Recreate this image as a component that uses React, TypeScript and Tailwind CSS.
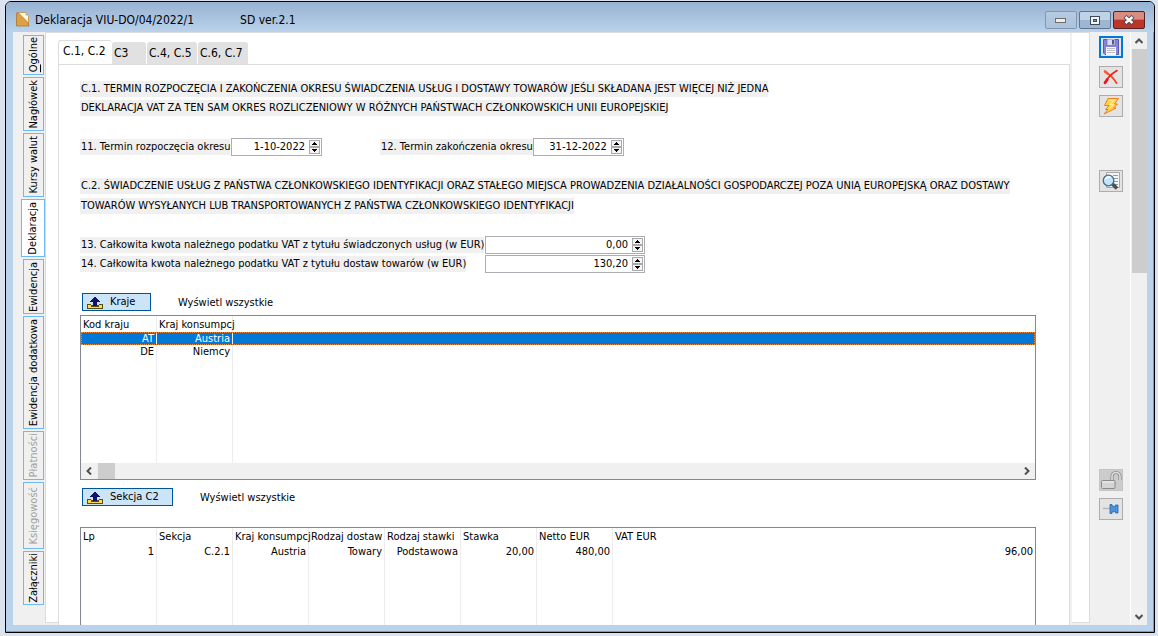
import React, { useState } from "react";

const sideTabs = [
  { label: "Ogólne", size: "h-10", underline: true },
  { label: "Nagłówek", size: "h-[54px]" },
  { label: "Kursy walut", size: "h-16" },
  { label: "Deklaracja", size: "h-[58px]" },
  { label: "Ewidencja", size: "h-[55px]" },
  { label: "Ewidencja dodatkowa", size: "h-[113px]" },
  { label: "Płatności", size: "h-[49px]", disabled: true },
  { label: "Księgowość", size: "h-[67px]", disabled: true },
  { label: "Załączniki", size: "h-[54px]" },
];

const pageTabs = [
  { label: "C.1, C.2", width: "w-[54px]" },
  { label: "C3", width: "w-[34px]" },
  { label: "C.4, C.5", width: "w-[50px]" },
  { label: "C.6, C.7", width: "w-[50px]" },
];

function SideTab({ tab, active, onClick }: { tab: (typeof sideTabs)[number]; active: boolean; onClick: () => void }) {
  return (
    <button
      type="button"
      disabled={tab.disabled}
      onClick={onClick}
      className={`flex shrink-0 items-center justify-center border border-[#6fb7f5] ${tab.size} ${
        active ? "w-6 bg-white" : "mr-px w-[21px] bg-[#f0f0f0]"
      } ${tab.disabled ? "text-[#a0a0a0]" : "text-black"}`}
    >
      <span className="rotate-180 leading-[14px] whitespace-nowrap [writing-mode:vertical-rl]">
        {tab.underline ? (
          <>
            <span className="underline">{tab.label[0]}</span>
            {tab.label.slice(1)}
          </>
        ) : (
          tab.label
        )}
      </span>
    </button>
  );
}

function Spinner({ id, value, width }: { id: string; value: string; width: string }) {
  const arrow = "flex h-[7px] w-[11px] items-center justify-center border border-[#a9a9a9] bg-[#f4f4f4]";
  return (
    <div className={`flex h-[18px] shrink-0 items-center border border-[#abadb3] bg-white pr-px ${width}`}>
      <input id={id} defaultValue={value} className="h-4 w-full min-w-0 bg-transparent pr-1 text-right outline-none" />
      <div className="flex shrink-0 flex-col">
        <button type="button" aria-label="Zwiększ" className={arrow}>
          <svg width="5" height="3" viewBox="0 0 5 3" shapeRendering="crispEdges"><path d="M2 0h1v1h1v1h1v1H0V2h1V1h1z" /></svg>
        </button>
        <button type="button" aria-label="Zmniejsz" className={arrow}>
          <svg width="5" height="3" viewBox="0 0 5 3" shapeRendering="crispEdges"><path d="M0 0h5v1H4v1H3v1H2V2H1V1H0z" /></svg>
        </button>
      </div>
    </div>
  );
}

function Label({ id, children }: { id: string; children: React.ReactNode }) {
  return (
    <label htmlFor={id} className="h-4 bg-[#f0f0f0] pl-px leading-4 whitespace-nowrap">
      {children}
    </label>
  );
}

function Heading({ lines, gap }: { lines: string[]; gap: string }) {
  return (
    <h2 className={`flex flex-col items-start ${gap}`}>
      {lines.map((line) => (
        <span key={line} className="h-4 bg-[#f0f0f0] pl-px leading-4 whitespace-nowrap">
          {line}
        </span>
      ))}
    </h2>
  );
}

function ExportBar({ label, width }: { label: string; width: string }) {
  return (
    <div className="ml-0.5 flex items-center gap-[27px]">
      <button type="button" className={`flex h-[18px] items-center gap-[7px] border border-[#00549a] bg-[#cce4f7] pt-px pl-1 ${width}`}>
        <svg width="16" height="12" viewBox="0 0 16 12" shapeRendering="crispEdges">
          <path d="M0 7h4v1h8V7h4v5H0z" fill="#5a4d10" />
          <path d="M1 8h3v2h8V8h3v3H1z" fill="#ffdb4a" />
          <path d="M7 0h2v1h1v1h1v1h1v1h1v1h-3v4H6V5H3V4h1V3h1V2h1V1h1z" fill="#141466" />
        </svg>
        <span className="whitespace-nowrap">{label}</span>
      </button>
      <span className="pt-px leading-4 whitespace-nowrap">Wyświetl wszystkie</span>
    </div>
  );
}

function Grid({
  columns,
  rows,
  selected,
  rowClass,
}: {
  columns: string[];
  rows: string[][];
  selected?: number;
  rowClass: string;
}) {
  const last = columns.length - 1;
  return (
    <table className="h-full w-full table-fixed border-separate border-spacing-0">
      <thead>
        <tr className="h-4">
          {columns.map((c, i) => (
            <th
              key={i}
              className={`p-0 pt-px pl-0.5 text-left leading-[15px] font-normal whitespace-nowrap ${
                i < last ? "w-[76px] border-r border-[#ececec]" : ""
              }`}
            >
              {c}
            </th>
          ))}
        </tr>
      </thead>
      <tbody>
        {rows.map((r, ri) => (
          <tr
            key={ri}
            className={`${rowClass} ${
              ri === selected ? "bg-[#0078d7] text-white outline-1 -outline-offset-1 outline-[#f08a3c] outline-dotted" : ""
            }`}
          >
            {r.map((v, i) => (
              <td
                key={i}
                className={`p-0 pr-0.5 text-right leading-[13px] whitespace-nowrap ${
                  i < last ? "border-r border-[#ececec]" : ""
                }`}
              >
                {v}
              </td>
            ))}
          </tr>
        ))}
        <tr>
          {columns.map((_, i) => (
            <td key={i} className={`p-0 ${i < last ? "border-r border-[#ececec]" : ""}`} />
          ))}
        </tr>
      </tbody>
    </table>
  );
}

function Chevron({ d }: { d: string }) {
  return (
    <svg width="8" height="8" viewBox="0 0 8 8" fill="none" stroke="#505050" strokeWidth="2">
      <path d={d} />
    </svg>
  );
}

function Tool({ label, variant = "normal", children }: { label: string; variant?: "normal" | "focus" | "off"; children: React.ReactNode }) {
  const look = {
    normal: "border border-[#adadad] bg-[#e3e3e3]",
    focus: "border-2 border-[#0078d7] bg-[#e3e3e3]",
    off: "border border-[#c4c4c4] bg-[#cccccc]",
  }[variant];
  return (
    <button type="button" aria-label={label} disabled={variant === "off"} className={`flex h-[22px] w-6 shrink-0 items-center justify-center ${look}`}>
      {children}
    </button>
  );
}

function Toolbar() {
  return (
    <div className="flex w-[41px] shrink-0 flex-col items-start border-r border-white pt-1 pl-[9px]">
      <div className="flex flex-col">
        <Tool label="Zapisz" variant="focus">
          <svg width="16" height="16" viewBox="0 0 16 16">
            <path d="M.5.5h15v15H2L.5 14z" fill="#8484d8" stroke="#5a5ab4" />
            <path d="M4 0h8v6.500H4z" fill="#dcdcec" stroke="#6a6abc" strokeWidth=".7" />
            <path d="M9 1h2v4.500H9z" fill="#5353ae" />
            <path d="M3 8h10v8H3z" fill="#f8f8fc" />
            <path d="M4 9.500h8M4 11.500h8M4 13.500h8" stroke="#b4b4c4" strokeWidth=".9" />
          </svg>
        </Tool>
        <div className="mt-2">
          <Tool label="Anuluj">
            <svg width="16" height="16" viewBox="0 0 16 16" fill="none" strokeLinecap="round">
              <path d="M2 2.500c4 2.500 9 7 11.500 11.500" stroke="#f4432b" strokeWidth="1.800" />
              <path d="M2 2.500l2.500 2" stroke="#ff5a30" strokeWidth="2.600" />
              <path d="M14 1.500C9 4.500 4 9 2 14" stroke="#e9241c" strokeWidth="1.600" />
              <path d="M2 13.800l2.300-3.300" stroke="#f01616" strokeWidth="2.800" />
            </svg>
          </Tool>
        </div>
        <div className="mt-[7px]">
          <Tool label="Wykonaj">
            <svg width="18" height="18" viewBox="0 0 18 18">
              <path d="M6 1.500h10.500L12.500 7h3l-4 4h2.500L2 17l4-4.500H3.500L7 8.500H2.500z" fill="#ffd64a" stroke="#f57c16" strokeLinejoin="round" />
              <path d="M7.500 3h5L8 7.500h3.500L7 11.500" fill="none" stroke="#fff0a0" />
            </svg>
          </Tool>
        </div>
      </div>
      <div className="mt-[53px]">
        <Tool label="Podgląd">
          <svg width="20" height="20" viewBox="0 0 20 20">
            <path d="M5.500 1.500h13v15h-13z" fill="#f3f3f3" stroke="#a6a6a6" />
            <path d="M12 4.500h5M13 7.500h4M13 10.500h4M13 13.500h4" stroke="#9a9a9a" />
            <path d="M11.500 13l4.500 4.500" stroke="#4d4d4d" strokeWidth="3.500" />
            <circle cx="7.500" cy="9.500" r="5.300" fill="#c4e4fa" stroke="#3c6c9c" strokeWidth="1.300" />
            <path d="M4.500 8.500a3.300 3.300 0 0 1 5-2" stroke="#fff" strokeWidth="1.500" fill="none" />
          </svg>
        </Tool>
      </div>
      <div className="mt-[277px] flex flex-col gap-[7px]">
        <Tool label="Odblokuj" variant="off">
          <svg width="22" height="20" viewBox="0 0 22 20">
            <path d="M12 10V6.500a4 4 0 0 1 8 0V10" fill="none" stroke="#8a8a8a" strokeWidth="3.200" />
            <path d="M12 10V6.500a4 4 0 0 1 8 0V10" fill="none" stroke="#dedede" strokeWidth="1.600" />
            <rect x="1.500" y="10.500" width="13.500" height="8" rx="1" fill="#d4d4d4" stroke="#8a8a8a" />
            <path d="M2.500 12h11.500" stroke="#f2f2f2" />
          </svg>
        </Tool>
        <Tool label="Przypnij">
          <svg width="16" height="12" viewBox="0 0 16 12">
            <path d="M0 5.500h7" stroke="#b3b3b3" strokeWidth="1.300" />
            <path d="M7 1.500h2v1.500l3.500 .5V2H15v8h-2.500V8.500L9 9v1.500H7z" fill="#4a92da" stroke="#2a65ae" strokeWidth=".8" />
          </svg>
        </Tool>
      </div>
    </div>
  );
}

function TitleBar() {
  const button = "flex h-[18px] w-8 items-center justify-center rounded-[2px] border";
  return (
    <header className="flex h-[30px] shrink-0 bg-gradient-to-b from-[#97b3d2] to-[#bad2eb] pr-[9px] pl-2.5">
      <svg className="mt-2.5" width="14" height="15" viewBox="0 0 14 15">
        <path d="M1 .5h8.500l3 3v10H1z" fill="#fff8e4" stroke="#c08a40" strokeWidth=".8" />
        <path d="M.5 1.500L2.500 1l9.500 9.500 1 3.500H.5z" fill="#dfa044" stroke="#a8702c" strokeWidth=".7" />
        <path d="M9.500.5v3h3z" fill="#d9b06a" />
      </svg>
      <h1 className="ml-[5px] pt-2.5 text-[12px] leading-[17px] whitespace-nowrap">Deklaracja VIU-DO/04/2022/1</h1>
      <span className="ml-[46px] pt-2.5 text-[12px] leading-[17px] whitespace-nowrap">SD ver.2.1</span>
      <div className="mt-[9px] ml-auto flex gap-0.5">
        <button type="button" aria-label="Minimalizuj" className={`${button} border-[#8197b0] bg-gradient-to-b from-[#b7cbe1] to-[#acc3dc]`}>
          <svg width="12" height="6" viewBox="0 0 12 6"><rect x=".5" y="1.500" width="10" height="4" fill="#ececec" stroke="#6e6e6e" /></svg>
        </button>
        <button type="button" aria-label="Maksymalizuj" className={`${button} border-[#60758f] bg-gradient-to-b from-[#c0d2e6] from-50% to-[#9db6d2] to-50%`}>
          <svg width="12" height="9" viewBox="0 0 12 9"><rect x="1.500" y=".5" width="9" height="8" fill="#f4f4f4" stroke="#3f4a58" /><rect x="4.500" y="3.500" width="3" height="2" fill="#7f9cbd" stroke="#3f4a58" /></svg>
        </button>
        <button type="button" aria-label="Zamknij" className={`${button} border-[#5b1f1c] bg-gradient-to-b from-[#d98c80] from-45% to-[#b8372a] to-50%`}>
          <svg width="12" height="10" viewBox="0 0 12 10">
            <path d="M2 1.500l8 7M10 1.500l-8 7" stroke="#4a4a55" strokeWidth="4.200" />
            <path d="M2.500 2l7 6M9.500 2l-7 6" stroke="#fff" strokeWidth="2.400" />
          </svg>
        </button>
      </div>
    </header>
  );
}

export default function App() {
  const [side, setSide] = useState(3);
  const [page, setPage] = useState(0);
  return (
    <div className="h-screen w-full overflow-hidden bg-[#dbe3ee] pt-px pr-[3px] pb-[3px] pl-[5px] font-['DejaVu_Sans_Condensed','DejaVu_Sans',sans-serif] text-[11px] text-black">
      <div className="flex h-full flex-col overflow-hidden rounded-t-md border border-black bg-[#bad2eb]">
        <TitleBar />
        <div className="flex min-h-0 grow border-r border-b border-[#35b8dc] pr-1.5 pb-1.5 pl-[7px]">
          <div className="flex min-w-0 grow bg-[#f0f0f0]">
            <nav className="flex w-8 shrink-0 flex-col items-end gap-0.5 pt-[3px]">
              {sideTabs.map((t, i) => (
                <SideTab key={t.label} tab={t} active={i === side} onClick={() => setSide(i)} />
              ))}
            </nav>
            <div className="flex min-w-0 grow border-t border-[#dcdcdc]">
              <div className="mb-0.5 w-[13px] shrink-0 border-b border-l border-[#dcdcdc] bg-white" />
              <div className="flex min-w-0 grow flex-col bg-white pt-[7px]">
                <div className="flex shrink-0 items-end gap-px text-[12px]">
                  {pageTabs.map((t, i) => (
                    <button
                      key={t.label}
                      type="button"
                      onClick={() => setPage(i)}
                      className={`rounded-t-[3px] text-left whitespace-nowrap ${t.width} ${
                        i === page ? "-mr-px h-6 border-t border-l border-[#dcdcdc] bg-white pb-1 pl-1" : "h-[22px] bg-[#e1e1e1] pl-0.5"
                      }`}
                    >
                      {t.label}
                    </button>
                  ))}
                </div>
                <main className="flex min-h-0 grow flex-col overflow-hidden border border-b-0 border-[#dcdcdc] pt-4 pr-[33px] pl-[21px]">
                  <Heading
                    gap="gap-[3px]"
                    lines={[
                      "C.1. TERMIN ROZPOCZĘCIA I ZAKOŃCZENIA OKRESU ŚWIADCZENIA USŁUG I DOSTAWY TOWARÓW JEŚLI SKŁADANA JEST WIĘCEJ NIŻ JEDNA",
                      "DEKLARACJA VAT ZA TEN SAM OKRES ROZLICZENIOWY W RÓŻNYCH PAŃSTWACH CZŁONKOWSKICH UNII EUROPEJSKIEJ",
                    ]}
                  />
                  <div className="mt-[22px] flex gap-[58px]">
                    <div className="flex w-[242px] items-center justify-between">
                      <Label id="start">11. Termin rozpoczęcia okresu</Label>
                      <Spinner id="start" value="1-10-2022" width="w-[91px]" />
                    </div>
                    <div className="flex w-[242px] items-center justify-between">
                      <Label id="end">12. Termin zakończenia okresu</Label>
                      <Spinner id="end" value="31-12-2022" width="w-[91px]" />
                    </div>
                  </div>
                  <div className="mt-[22px]">
                    <Heading
                      gap="gap-1"
                      lines={[
                        "C.2. ŚWIADCZENIE USŁUG Z PAŃSTWA CZŁONKOWSKIEGO IDENTYFIKACJI ORAZ STAŁEGO MIEJSCA PROWADZENIA DZIAŁALNOŚCI GOSPODARCZEJ POZA UNIĄ EUROPEJSKĄ ORAZ DOSTAWY",
                        "TOWARÓW WYSYŁANYCH LUB TRANSPORTOWANYCH Z PAŃSTWA CZŁONKOWSKIEGO IDENTYFIKACJI",
                      ]}
                    />
                  </div>
                  <div className="mt-[22px] flex w-[565px] flex-col gap-px">
                    <div className="flex items-center justify-between">
                      <Label id="services">13. Całkowita kwota należnego podatku VAT z tytułu świadczonych usług (w EUR)</Label>
                      <Spinner id="services" value="0,00" width="w-40" />
                    </div>
                    <div className="flex items-center justify-between">
                      <Label id="goods">14. Całkowita kwota należnego podatku VAT z tytułu dostaw towarów (w EUR)</Label>
                      <Spinner id="goods" value="130,20" width="w-40" />
                    </div>
                  </div>
                  <div className="mt-5">
                    <ExportBar label="Kraje" width="w-[69px]" />
                  </div>
                  <section className="mt-1 flex h-[165px] shrink-0 flex-col border border-[#828790] bg-white">
                    <div className="min-h-0 grow">
                      <Grid
                        columns={["Kod kraju", "Kraj konsumpcj", ""]}
                        rows={[["AT", "Austria", ""], ["DE", "Niemcy", ""]]}
                        selected={0}
                        rowClass="h-[13px]"
                      />
                    </div>
                    <div className="flex h-4 shrink-0 items-center bg-[#f0f0f0] px-1">
                      <Chevron d="M6 0.500L2.500 4L6 7.500" />
                      <div className="ml-[5px] h-4 w-[17px] bg-[#cdcdcd]" />
                      <div className="ml-auto flex">
                        <Chevron d="M2 0.500L5.500 4L2 7.500" />
                      </div>
                    </div>
                  </section>
                  <div className="mt-2">
                    <ExportBar label="Sekcja C2" width="w-[91px]" />
                  </div>
                  <section className="mt-[21px] min-h-0 grow border border-b-0 border-[#828790] bg-white">
                    <Grid
                      columns={["Lp", "Sekcja", "Kraj konsumpcj", "Rodzaj dostaw", "Rodzaj stawki", "Stawka", "Netto EUR", "VAT EUR"]}
                      rows={[["1", "C.2.1", "Austria", "Towary", "Podstawowa", "20,00", "480,00", "96,00"]]}
                      rowClass="h-[15px]"
                    />
                  </section>
                </main>
              </div>
              <div className="mb-0.5 ml-0.5 w-[18px] shrink-0 border-r border-b border-[#dcdcdc] bg-white" />
            </div>
            <Toolbar />
            <div className="flex w-4 shrink-0 flex-col items-center bg-[#f0f0f0] pt-[5px] pb-1">
              <Chevron d="M0.500 6L4 2.500L7.500 6" />
              <div className="mt-1 h-56 w-[15px] bg-[#cdcdcd]" />
              <div className="mt-auto">
                <Chevron d="M0.500 2L4 5.500L7.500 2" />
              </div>
            </div>
          </div>
        </div>
      </div>
    </div>
  );
}
